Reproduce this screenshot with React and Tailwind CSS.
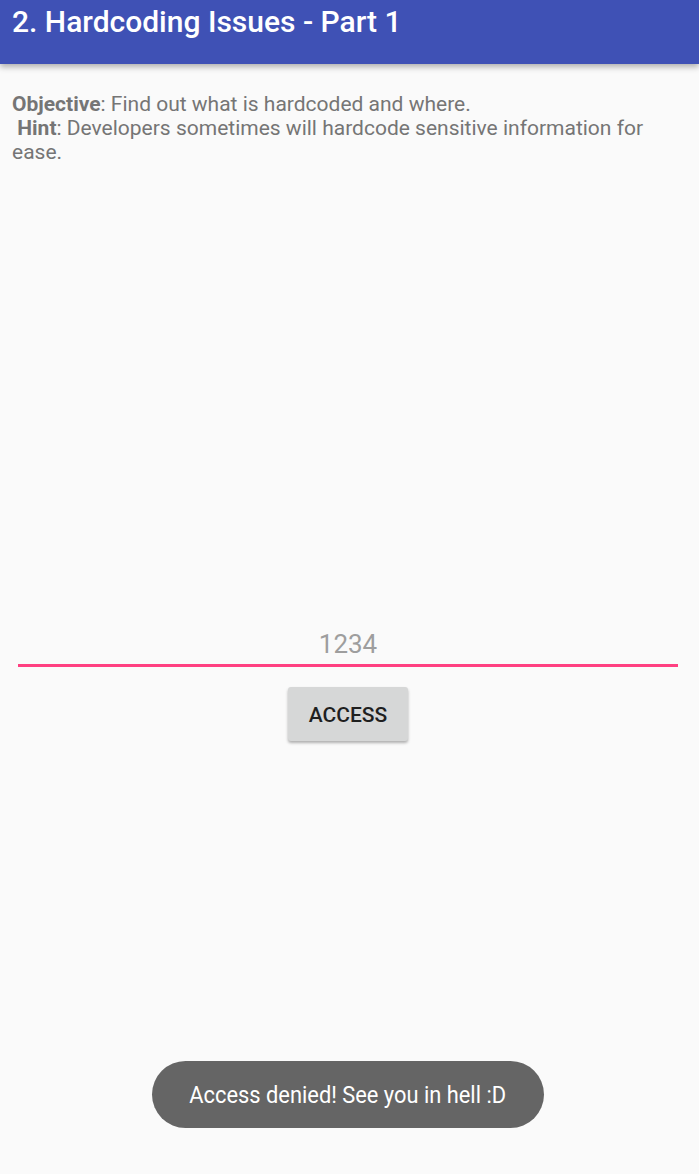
export default function App() {
  return (
    <div className="relative w-[699px] h-[1174px] bg-[#fafafa] overflow-hidden" style={{ fontFamily: "Roboto, 'Noto Sans', sans-serif" }}>
      <div className="h-16 bg-[#3f51b5] shadow-[0_3px_6px_rgba(0,0,0,0.3)] px-3 relative z-10">
        <div className="text-white text-[30px] font-medium leading-[44px]">2. Hardcoding Issues - Part 1</div>
      </div>
      <div className="px-3 pt-[28px] text-[21px] leading-[24px] text-[#757575]">
        <p><span className="font-bold">Objective</span>: Find out what is hardcoded and where.</p>
        <p>&nbsp;<span className="font-bold">Hint</span>: Developers sometimes will hardcode sensitive information for ease.</p>
      </div>
      <div className="mt-[455px] ml-[18px] mr-[21px]">
        <div className="h-[48px] border-b-[3px] border-[#ff4081] flex items-end justify-center pb-[5px]">
          <span className="text-[26px] leading-[30px] text-[#9e9e9e]">1234</span>
        </div>
        <div className="flex justify-center mt-[20px]">
          <div className="w-[120px] h-[54px] pt-[3px] bg-[#d6d7d7] rounded-[3px] shadow-[0_2px_3px_rgba(0,0,0,0.3)] flex items-center justify-center">
            <span className="text-[21px] font-medium text-[#1f1f1f]">ACCESS</span>
          </div>
        </div>
      </div>
      <div className="absolute left-[152px] top-[1061px] w-[392px] h-[67px] pt-[4px] rounded-full bg-[#656565] flex items-center justify-center">
        <span className="text-white text-[23px] scale-x-[0.95] inline-block whitespace-nowrap">Access denied! See you in hell :D</span>
      </div>
    </div>
  );
}
